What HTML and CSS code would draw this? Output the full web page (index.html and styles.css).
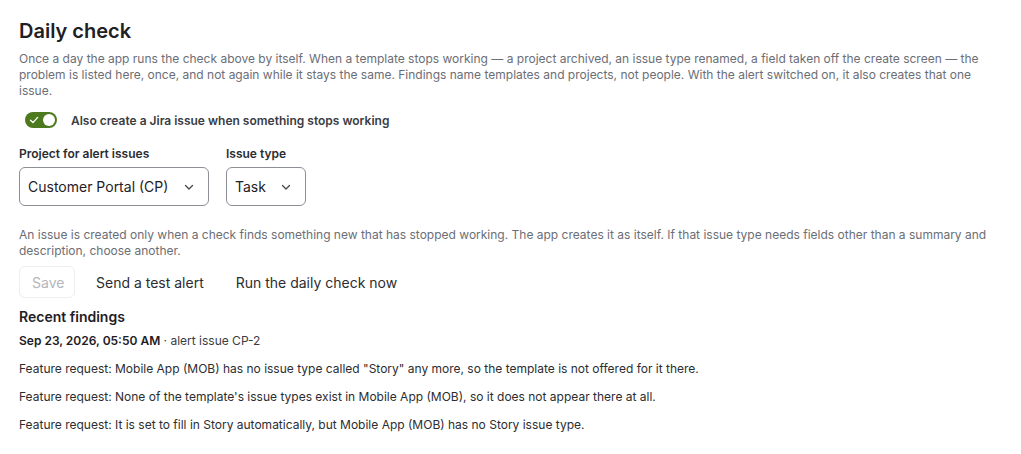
FILE: index.html
```html
<!DOCTYPE html>
<html lang="en">
<head>
<meta charset="utf-8">
<title>Daily check</title>
<link rel="stylesheet" href="styles.css">
</head>
<body>
<main class="page">
  <h1 class="title">Daily check</h1>
  <p class="lead">Once a day the app runs the check above by itself. When a template stops working — a project archived, an issue type renamed, a field taken off the create screen — the problem is listed here, once, and not again while it stays the same. Findings name templates and projects, not people. With the alert switched on, it also creates that one issue.</p>

  <label class="toggle-row">
    <span class="toggle">
      <svg class="toggle-check" width="10" height="10" viewBox="0 0 10 10"><path d="M1.5 5.2 L4 7.6 L8.6 2.4" fill="none" stroke="#fff" stroke-width="1.4" stroke-linecap="round" stroke-linejoin="round"/></svg>
      <span class="toggle-knob"></span>
    </span>
    <span class="toggle-label">Also create a Jira issue when something stops working</span>
  </label>

  <div class="fields">
    <div class="field">
      <div class="field-label">Project for alert issues</div>
      <div class="select select-project">
        <span>Customer Portal (CP)</span>
        <svg class="chev" width="12" height="12" viewBox="0 0 12 12"><path d="M2.5 4.5 L6 8 L9.5 4.5" fill="none" stroke="#44464c" stroke-width="1.3" stroke-linecap="round" stroke-linejoin="round"/></svg>
      </div>
    </div>
    <div class="field">
      <div class="field-label">Issue type</div>
      <div class="select select-type">
        <span>Task</span>
        <svg class="chev" width="12" height="12" viewBox="0 0 12 12"><path d="M2.5 4.5 L6 8 L9.5 4.5" fill="none" stroke="#44464c" stroke-width="1.3" stroke-linecap="round" stroke-linejoin="round"/></svg>
      </div>
    </div>
  </div>

  <p class="help">An issue is created only when a check finds something new that has stopped working. The app creates it as itself. If that issue type needs fields other than a summary and description, choose another.</p>

  <div class="actions">
    <button class="btn btn-disabled" disabled>Save</button>
    <button class="btn btn-link">Send a test alert</button>
    <button class="btn btn-link">Run the daily check now</button>
  </div>

  <h2 class="subtitle">Recent findings</h2>
  <div class="meta"><strong>Sep 23, 2026, 05:50 AM</strong> · alert issue CP-2</div>
  <ul class="findings">
    <li>Feature request: Mobile App (MOB) has no issue type called "Story" any more, so the template is not offered for it there.</li>
    <li>Feature request: None of the template's issue types exist in Mobile App (MOB), so it does not appear there at all.</li>
    <li>Feature request: It is set to fill in Story automatically, but Mobile App (MOB) has no Story issue type.</li>
  </ul>
</main>
</body>
</html>
```

FILE: styles.css
```css
* { box-sizing: border-box; }
html, body { margin: 0; padding: 0; background: #fff; }
body {
  font-family: Inter, "Noto Sans", "Liberation Sans", sans-serif;
  color: #1f2024;
}
.page {
  padding: 18px 19px 0 19px;
  max-width: 1021px;
}
.title {
  margin: 0;
  font-size: 20px;
  line-height: 26px;
  font-weight: 600;
  color: #1f2024;
}
.lead {
  margin: 7px 0 0;
  font-size: 12px;
  line-height: 16px;
  color: #6b6e76;
}
.toggle-row {
  display: flex;
  align-items: center;
  gap: 14px;
  margin: 13px 0 0 6px;
}
.toggle {
  position: relative;
  display: inline-flex;
  align-items: center;
  width: 32px;
  height: 16px;
  border-radius: 8px;
  background: #4d7a1f;
}
.toggle-check { margin-left: 4px; }
.toggle-knob {
  position: absolute;
  right: 2px;
  top: 2px;
  width: 12px;
  height: 12px;
  border-radius: 50%;
  background: #fff;
}
.toggle-label {
  font-size: 12px;
  font-weight: 600;
  color: #3b3d42;
}
.fields {
  display: flex;
  gap: 17px;
  margin-top: 18px;
}
.field-label {
  font-size: 12px;
  font-weight: 600;
  line-height: 16px;
  color: #2b2d31;
  margin-bottom: 5px;
}
.select {
  display: flex;
  align-items: center;
  justify-content: space-between;
  height: 39px;
  border: 1px solid #8c8f96;
  border-radius: 6px;
  padding: 0 13px 0 8px;
  font-size: 14px;
  color: #1f2024;
}
.select-project { width: 190px; }
.select-type { width: 80px; }
.chev { flex: none; }
.help {
  margin: 21px 0 0;
  font-size: 12px;
  line-height: 16px;
  color: #6b6e76;
}
.actions {
  display: flex;
  align-items: center;
  margin-top: 7px;
}
.btn {
  font-family: inherit;
  font-size: 14px;
  background: none;
  border: 1px solid transparent;
  border-radius: 6px;
  height: 32px;
  padding: 0 12px;
  color: #2b2d31;
  cursor: pointer;
}
.btn-disabled {
  width: 56px;
  border-color: #eeeef0;
  color: #b4b6bb;
  cursor: default;
  margin-right: 8px;
}
.btn-link { margin-right: 6px; }
.subtitle {
  margin: 9px 0 0;
  font-size: 14px;
  line-height: 20px;
  font-weight: 600;
  color: #1f2024;
}
.meta {
  margin-top: 6px;
  font-size: 12px;
  line-height: 16px;
  color: #3b3d42;
}
.meta strong { font-weight: 600; color: #1f2024; }
.findings {
  list-style: none;
  margin: 12px 0 0;
  padding: 0;
  font-size: 12px;
  line-height: 16px;
  color: #2b2d31;
}
.findings li { margin-bottom: 12px; }
```
